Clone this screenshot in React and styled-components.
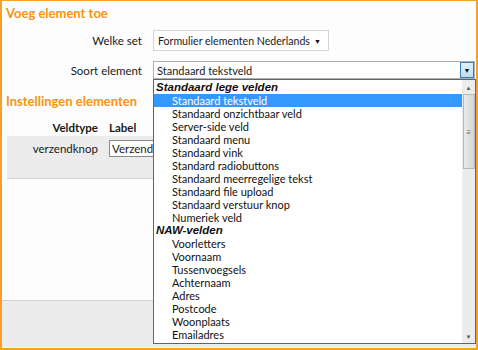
import React from 'react';
import styled, { createGlobalStyle } from 'styled-components';

const Global = createGlobalStyle`
  body {
    margin: 0;
    font-family: Lato, "Open Sans", sans-serif;
    font-size: 11px;
    color: #1a1a1a;
  }
`;

const Frame = styled.div`
  position: relative;
  box-sizing: border-box;
  width: 478px;
  height: 350px;
  border: 2px solid #f6a02c;
  border-top-width: 1px;
  background: #fdfdfd;
  display: flex;
  flex-direction: column;
  overflow: hidden;
`;

const Heading = styled.div`
  color: #f39419;
  font-weight: bold;
  font-size: 13px;
  line-height: 16px;
  padding-left: 4px;
  margin-top: ${p => p.$top}px;
`;

const FormRow = styled.div`
  display: grid;
  grid-template-columns: 140px 1fr;
  column-gap: 11px;
  align-items: center;
  margin-top: ${p => p.$top}px;
`;

const RowLabel = styled.div`
  text-align: right;
  white-space: nowrap;
  font-size: 11.5px;
`;

const Select = styled.div`
  box-sizing: border-box;
  width: 176px;
  height: 21px;
  border: 1px solid #d4d4d4;
  background: #fff;
  display: flex;
  align-items: center;
  justify-content: space-between;
  padding: 0 7px 0 4px;
  white-space: nowrap;
  font-size: 10.6px;
`;

const Caret = styled.span`
  font-size: 7px;
  color: #111;
`;

const Combo = styled.div`
  position: relative;
  box-sizing: border-box;
  width: 322px;
  height: 18px;
  border: 1px solid #aab0b8;
  background: #fff;
  display: flex;
  align-items: center;
  padding-left: 3px;
`;

const ComboText = styled.span`
  flex: 1;
`;

const ComboButton = styled.span`
  box-sizing: border-box;
  width: 14px;
  height: 16px;
  border: 1px solid #3c7fb1;
  background: linear-gradient(#e3f1fb, #bcdcf4);
  display: flex;
  align-items: center;
  justify-content: center;
  font-size: 7px;
  color: #111;
`;

const Dropdown = styled.div`
  position: absolute;
  left: -1px;
  top: 17px;
  box-sizing: border-box;
  width: 323px;
  height: 265px;
  border: 1px solid #646464;
  background: #fff;
  display: flex;
  z-index: 5;
`;

const Options = styled.div`
  flex: 1;
  padding-top: 1px;
`;

const Option = styled.div`
  height: 13px;
  line-height: 13px;
  white-space: nowrap;
  overflow: hidden;
  padding-left: ${p => (p.$group ? 2 : 18)}px;
  font-weight: ${p => (p.$group ? 'bold' : 'normal')};
  font-style: ${p => (p.$group ? 'italic' : 'normal')};
  font-family: ${p => (p.$group ? '"Liberation Sans", Arial, sans-serif' : 'inherit')};
  font-size: ${p => (p.$group ? '11.5px' : '11px')};
  background: ${p => (p.$selected ? '#3399ff' : 'transparent')};
  color: ${p => (p.$selected ? '#fff' : '#111')};
`;

const Scrollbar = styled.div`
  width: 13px;
  background: #ececec;
  display: flex;
  flex-direction: column;
  align-items: center;
`;

const Arrow = styled.div`
  height: 14px;
  font-size: 6px;
  color: #555;
  display: flex;
  align-items: center;
  justify-content: center;
`;

const Thumb = styled.div`
  box-sizing: border-box;
  width: 12px;
  height: 75px;
  border: 1px solid #b8b8b8;
  background: linear-gradient(90deg, #e8e8e8, #d6d6d6);
  display: flex;
  align-items: center;
  justify-content: center;
  font-size: 8px;
  color: #666;
`;

const Track = styled.div`
  flex: 1;
`;

const Table = styled.div`
  margin: 10px 0 0 5px;
  border-bottom: 1px solid #d0d0d0;
`;

const TableRow = styled.div`
  display: grid;
  grid-template-columns: 91px 1fr;
  column-gap: 11px;
  align-items: ${p => (p.$body ? 'start' : 'center')};
  height: ${p => (p.$body ? 42 : 17)}px;
  padding-top: ${p => (p.$body ? 4 : 0)}px;
  box-sizing: border-box;
  background: ${p => (p.$body ? '#ececec' : 'transparent')};
  font-weight: ${p => (p.$body ? 'normal' : 'bold')};
  font-size: 11.5px;
`;

const Cell = styled.div`
  text-align: ${p => (p.$right ? 'right' : 'left')};
  line-height: 17px;
`;

const TextInput = styled.div`
  box-sizing: border-box;
  width: 120px;
  height: 17px;
  border: 1px solid #8a8a8a;
  background: #fff;
  padding-left: 2px;
  line-height: 15px;
`;

const Spacer = styled.div`
  flex: 1;
`;

const Footer = styled.div`
  height: 46px;
  border-top: 1px solid #d0d0d0;
  border-bottom: 1px solid #f4f4f4;
  background: #ececec;
`;

const groups = [
  {
    name: 'Standaard lege velden',
    items: [
      'Standaard tekstveld',
      'Standaard onzichtbaar veld',
      'Server-side veld',
      'Standaard menu',
      'Standaard vink',
      'Standard radiobuttons',
      'Standaard meerregelige tekst',
      'Standaard file upload',
      'Standaard verstuur knop',
      'Numeriek veld',
    ],
  },
  {
    name: 'NAW-velden',
    items: [
      'Voorletters',
      'Voornaam',
      'Tussenvoegsels',
      'Achternaam',
      'Adres',
      'Postcode',
      'Woonplaats',
      'Emailadres',
    ],
  },
];

const selected = 'Standaard tekstveld';

const App = () => {
  return (
    <>
      <Global />
      <Frame>
        <Heading $top={4}>Voeg element toe</Heading>

        <FormRow $top={9}>
          <RowLabel>Welke set</RowLabel>
          <Select>
            <span>Formulier elementen Nederlands</span>
            <Caret>▼</Caret>
          </Select>
        </FormRow>

        <FormRow $top={10}>
          <RowLabel>Soort element</RowLabel>
          <Combo>
            <ComboText>{selected}</ComboText>
            <ComboButton>▼</ComboButton>
            <Dropdown>
              <Options>
                {groups.map(g => (
                  <React.Fragment key={g.name}>
                    <Option $group>{g.name}</Option>
                    {g.items.map(item => (
                      <Option key={item} $selected={item === selected}>
                        {item}
                      </Option>
                    ))}
                  </React.Fragment>
                ))}
              </Options>
              <Scrollbar>
                <Arrow>▲</Arrow>
                <Thumb>≡</Thumb>
                <Track />
                <Arrow>▼</Arrow>
              </Scrollbar>
            </Dropdown>
          </Combo>
        </FormRow>

        <Heading $top={14}>Instellingen elementen</Heading>

        <Table>
          <TableRow>
            <Cell $right>Veldtype</Cell>
            <Cell>Label</Cell>
          </TableRow>
          <TableRow $body>
            <Cell $right>verzendknop</Cell>
            <TextInput>Verzendknop</TextInput>
          </TableRow>
        </Table>

        <Spacer />
        <Footer />
      </Frame>
    </>
  );
};

export default App;
